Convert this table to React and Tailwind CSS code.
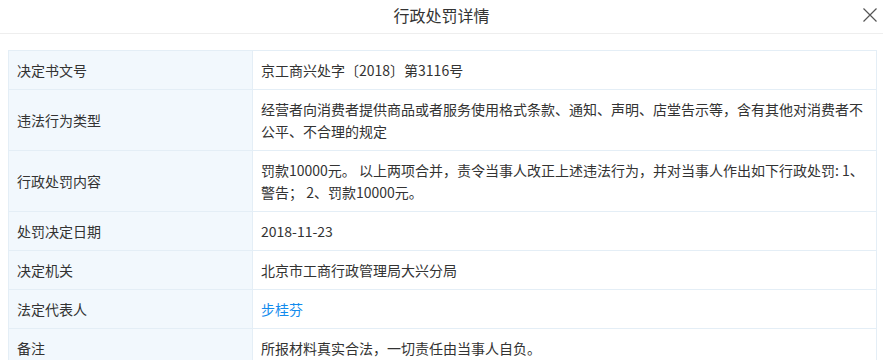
import React from "react";

const rows = [
  { label: "决定书文号", value: "京工商兴处字〔2018〕第3116号" },
  {
    label: "违法行为类型",
    value:
      "经营者向消费者提供商品或者服务使用格式条款、通知、声明、店堂告示等，含有其他对消费者不公平、不合理的规定",
  },
  {
    label: "行政处罚内容",
    value:
      "罚款10000元。 以上两项合并，责令当事人改正上述违法行为，并对当事人作出如下行政处罚: 1、警告； 2、罚款10000元。",
  },
  { label: "处罚决定日期", value: "2018-11-23" },
  { label: "决定机关", value: "北京市工商行政管理局大兴分局" },
  { label: "法定代表人", value: "步桂芬", link: true },
  { label: "备注", value: "所报材料真实合法，一切责任由当事人自负。" },
];

export default function App() {
  return (
    <div
      className="w-[883px] h-[360px] overflow-hidden bg-white text-[#333]"
      style={{ fontFamily: '"Noto Sans CJK SC", "Noto Sans", sans-serif' }}
    >
      <div className="relative h-[34px] border-b border-[#eeeeee] flex items-center justify-center">
        <h1 className="text-[16px] leading-[22px] text-[#333] -mt-[3px]">行政处罚详情</h1>
        <svg
          className="absolute right-[6px] top-[8px]"
          width="14"
          height="14"
          viewBox="0 0 14 14"
          fill="none"
          stroke="#555"
          strokeWidth="1.2"
        >
          <path d="M0.5 0.5 L13.5 13.5 M13.5 0.5 L0.5 13.5" />
        </svg>
      </div>

      <div className="mt-4 ml-2 mr-[6px]">
        <table className="w-full border-collapse text-[14px] leading-[22px]">
          <tbody>
            {rows.map((r, i) => (
              <tr key={i}>
                <td className="w-[244px] bg-[#f2f8fd] border border-[#e4eef6] px-2 py-2 align-middle">
                  {r.label}
                </td>
                <td className="border border-[#e4eef6] px-2 py-2 align-middle">
                  {r.link ? (
                    <span className="text-[#128bed]">{r.value}</span>
                  ) : (
                    r.value
                  )}
                </td>
              </tr>
            ))}
          </tbody>
        </table>
      </div>
    </div>
  );
}
